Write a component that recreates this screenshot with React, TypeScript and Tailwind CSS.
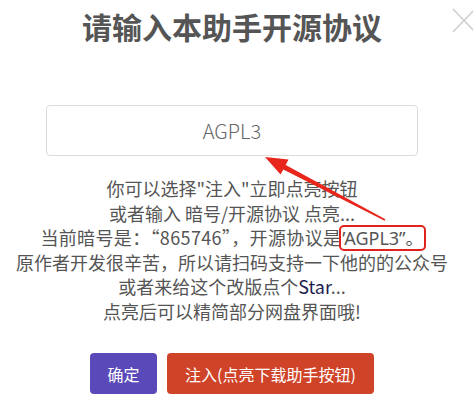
export default function App() {
  return (
    <div
      className="relative w-[473px] h-[405px] bg-white overflow-hidden"
      style={{ fontFamily: '"Noto Sans CJK SC", "Noto Sans", sans-serif' }}
    >
      <div className="w-[464px] flex flex-col items-center">
        <h1 className="pt-[6px] text-[30px] leading-[40px] font-bold text-[#555]">请输入本助手开源协议</h1>

        <div className="mt-[59px] w-[372px] h-[51px] border border-[#dcdcdc] rounded-[4px] flex items-center justify-center text-[20px] font-light text-[#666]">
          AGPL3
        </div>

        <div className="mt-[20px] text-center text-[18px] leading-[24.5px] text-[#555]">
          <p>你可以选择"注入"立即点亮按钮</p>
          <p>或者输入 暗号/开源协议 点亮...</p>
          <p>
            <span className="tracking-[0.35px]">当前暗号是：“865746”，开源协议是</span>
            <span className="inline-block outline-2 outline-[#e0231b] rounded-[3px] leading-[21px] pl-[1px]">
              <span className="font-['Noto_Sans']">’AGPL3”</span>。
            </span>
          </p>
          <p>原作者开发很辛苦，所以请扫码支持一下他的的公众号</p>
          <p>
            或者来给这个改版点个<span className="text-[#1e1e50]">Star</span>...
          </p>
          <p>点亮后可以精简部分网盘界面哦!</p>
        </div>

        <div className="mt-[30px] flex gap-[10px]">
          <button className="w-[67px] h-[41px] rounded-[4px] bg-[#5a49b8] text-white text-[16px]">确定</button>
          <button className="w-[207px] h-[41px] rounded-[4px] bg-[#cf4429] text-white text-[16px]">注入(点亮下载助手按钮)</button>
        </div>
      </div>

      <svg className="absolute left-[450px] top-[6px]" width="26" height="28" viewBox="0 0 26 28">
        <path d="M3 3 L25 26 M25 3 L3 26" stroke="#cfcfcf" strokeWidth="1.6" fill="none" />
      </svg>

      <svg className="absolute left-0 top-0 pointer-events-none" width="473" height="405" viewBox="0 0 473 405">
        <polygon
          points="265,157 288.5,159.5 285.7,165 385.4,219.3 384.6,220.7 283.3,169.4 280.5,174.5"
          fill="#e8261c"
        />
      </svg>
    </div>
  );
}
